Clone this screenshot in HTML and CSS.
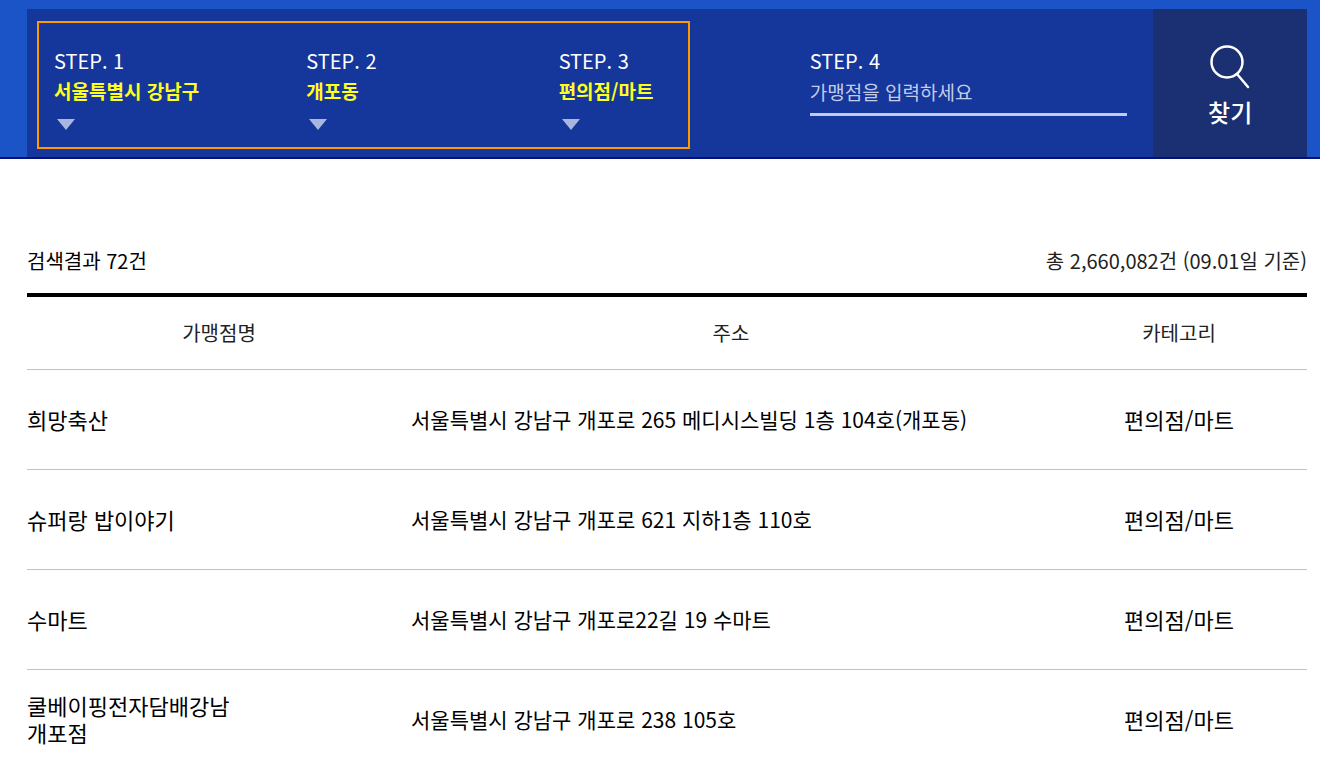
FILE: index.html
```html
<!DOCTYPE html>
<html lang="ko">
<head>
<meta charset="utf-8">
<meta name="viewport" content="width=device-width, initial-scale=1">
<title>가맹점 찾기</title>
<link rel="stylesheet" href="styles.css">
</head>
<body>
<header class="search-band">
  <form class="search-panel">
    <div class="step-group">
      <div class="step">
        <label class="step-label" for="region">STEP. 1</label>
        <select class="step-select" id="region"><option>서울특별시 강남구</option></select>
        <svg class="step-arrow" viewBox="0 0 18 11" aria-hidden="true"><path d="M0 0H18L9 11Z"/></svg>
      </div>
      <div class="step">
        <label class="step-label" for="town">STEP. 2</label>
        <select class="step-select" id="town"><option>개포동</option></select>
        <svg class="step-arrow" viewBox="0 0 18 11" aria-hidden="true"><path d="M0 0H18L9 11Z"/></svg>
      </div>
      <div class="step">
        <label class="step-label" for="category">STEP. 3</label>
        <select class="step-select" id="category"><option>편의점/마트</option></select>
        <svg class="step-arrow" viewBox="0 0 18 11" aria-hidden="true"><path d="M0 0H18L9 11Z"/></svg>
      </div>
    </div>
    <div class="keyword">
      <label class="step-label" for="store">STEP. 4</label>
      <input class="keyword-input" id="store" type="text" placeholder="가맹점을 입력하세요">
    </div>
    <button class="search-button" type="submit">
      <svg class="search-icon" viewBox="0 0 42 46" aria-hidden="true"><circle cx="18" cy="18" r="15.5"/><path d="M28 30L39 43"/></svg>
      <span>찾기</span>
    </button>
  </form>
</header>
<main class="results">
  <div class="summary">
    <p class="summary-count">검색결과 72건</p>
    <p class="summary-total">총 2,660,082건 (09.01일 기준)</p>
  </div>
  <table class="stores">
    <thead>
      <tr><th class="col-name" scope="col">가맹점명</th><th class="col-address" scope="col">주소</th><th class="col-category" scope="col">카테고리</th></tr>
    </thead>
    <tbody>
      <tr><td class="name">희망축산</td><td class="address">서울특별시 강남구 개포로 265 메디시스빌딩 1층 104호(개포동)</td><td class="category">편의점/마트</td></tr>
      <tr><td class="name">슈퍼랑 밥이야기</td><td class="address">서울특별시 강남구 개포로 621 지하1층 110호</td><td class="category">편의점/마트</td></tr>
      <tr><td class="name">수마트</td><td class="address">서울특별시 강남구 개포로22길 19 수마트</td><td class="category">편의점/마트</td></tr>
      <tr><td class="name">쿨베이핑전자담배강남 개포점</td><td class="address">서울특별시 강남구 개포로 238 105호</td><td class="category">편의점/마트</td></tr>
    </tbody>
  </table>
</main>
</body>
</html>
```

FILE: styles.css
```css
* { box-sizing: border-box; }

body {
  margin: 0;
  background: #fff;
  color: #000;
  font-family: "Noto Sans CJK KR", sans-serif;
  font-size: 22px;
  line-height: 27px;
}

button, input, select { font-family: inherit; }

.search-band {
  padding: 9px 13px 0 27px;
  background: #1b54c6;
  border-bottom: 2px solid #04107c;
}

.search-panel {
  display: flex;
  background: #15369a;
}

.step-group {
  flex: 0 0 51%;
  display: grid;
  grid-template-columns: 2fr 2fr 1fr;
  margin: 12px 0 8px 10px;
  padding: 23px 3px 17px 15px;
  border: 2px solid #ff9900;
}

.step {
  display: flex;
  flex-direction: column;
  align-items: flex-start;
}

.step-label {
  display: block;
  color: #fff;
  font-size: 20px;
  line-height: 30px;
}

.step-select {
  appearance: none;
  padding: 0;
  border: 0;
  background: none;
  color: #ffff1f;
  font-size: 19px;
  font-weight: 700;
  line-height: 30px;
}

.step-arrow {
  width: 18px;
  height: 11px;
  margin: 13px 0 0 3px;
  fill: #a9b7de;
}

.keyword {
  flex: 1;
  margin: 37px 26px 0 120px;
}

.keyword-input {
  display: block;
  width: 100%;
  height: 40px;
  padding: 0 0 7px;
  border: 0;
  border-bottom: 3px solid #c3cbea;
  background: none;
  color: #fff;
  font-size: 19px;
}

.keyword-input::placeholder { color: #c3cde9; opacity: 1; }

.search-button {
  flex: 0 0 12%;
  display: flex;
  flex-direction: column;
  align-items: center;
  justify-content: center;
  gap: 4px;
  padding: 8px 0 0;
  border: 0;
  background: #1b3073;
  color: #fff;
  font-size: 24px;
  font-weight: 500;
  line-height: 36px;
}

.search-icon {
  width: 42px;
  height: 46px;
  fill: none;
  stroke: #fff;
  stroke-width: 2.5;
  stroke-linecap: round;
}

.results { padding: 87px 13px 0 27px; }

.summary {
  display: flex;
  justify-content: space-between;
  padding-bottom: 17px;
  border-bottom: 4px solid #000;
  font-size: 20px;
  line-height: 30px;
}

.summary p { margin: 0; }

.summary-total { color: #222; }

.stores {
  width: 100%;
  border-collapse: collapse;
  table-layout: fixed;
}

.stores th, .stores td {
  padding: 0;
  border-bottom: 1px solid #c2c2c2;
}

.stores th {
  height: 72px;
  color: #222;
  font-size: 20px;
  font-weight: 400;
}

.stores td { height: 100px; }

.col-name { width: 30%; }
.col-address { width: 50%; }
.col-category { width: 20%; }

.stores .name {
  padding-right: 120px;
  word-break: keep-all;
}

.address { font-size: 21px; }

.category { text-align: center; }
```
